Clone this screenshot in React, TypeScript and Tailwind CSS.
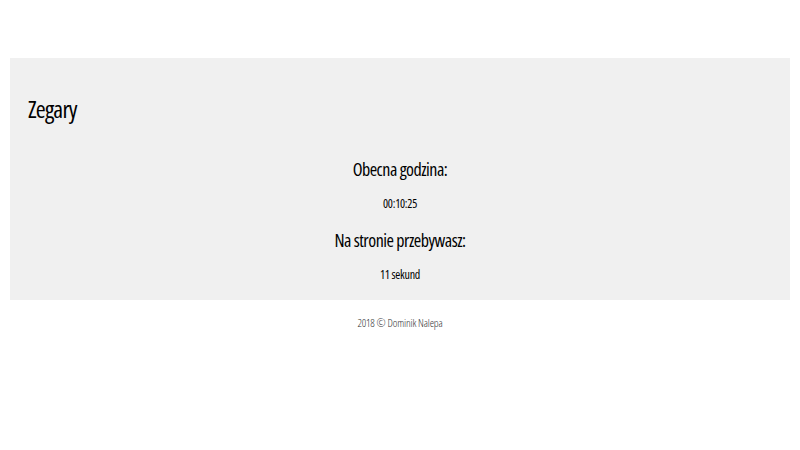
import React from 'react'

const App: React.FC = () => {
  return (
    <div className="min-h-[450px] bg-white pt-[58px] text-black [font-family:'Open_Sans',sans-serif] [font-stretch:75%] font-light">
      <main className="mx-[10px] h-[242px] bg-[#f0f0f0] px-[18px] pt-[36px]">
        <h1 className="text-[24px] leading-[30px] font-normal tracking-[-0.8px]">Zegary</h1>
        <div className="mt-[33px] flex flex-col items-center">
          <h2 className="text-[18px] leading-[24px] font-normal tracking-[-0.5px]">Obecna godzina:</h2>
          <p className="mt-[15px] text-[12px] leading-[16px] font-normal tracking-[-0.25px]">00:10:25</p>
          <h2 className="mt-[16px] text-[18px] leading-[24px] font-normal tracking-[-0.5px]">Na stronie przebywasz:</h2>
          <p className="mt-[15px] text-[12px] leading-[16px] font-normal tracking-[-0.25px]">11 sekund</p>
        </div>
      </main>
      <footer className="mt-[16px] text-center text-[11px] leading-[14px] text-[#333] tracking-[-0.15px]">
        2018 © Dominik Nalepa
      </footer>
    </div>
  )
}

export default App
